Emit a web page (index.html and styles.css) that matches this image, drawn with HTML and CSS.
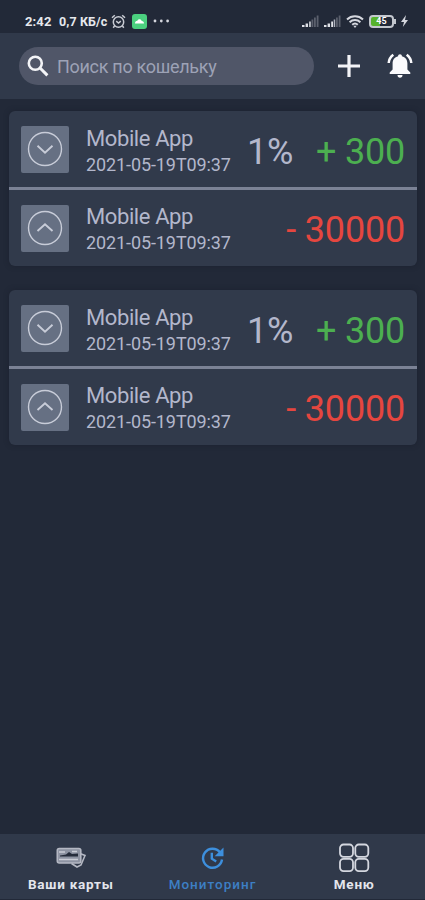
FILE: index.html
```html
<!DOCTYPE html>
<html lang="ru">
<head>
<meta charset="utf-8">
<title>Мониторинг</title>
<link rel="stylesheet" href="styles.css">
</head>
<body>
<div class="screen">
  <div class="status">
    <span class="time">2:42</span>
    <span class="speed">0,7 КБ/с</span>
    <svg class="alarm" width="15" height="15" viewBox="0 0 15 15" fill="none" stroke="#c9ccd4" stroke-width="1.5"><circle cx="7.5" cy="8" r="5.2"/><path d="M5.2 7.2l2.3 1.8 2.3-1.8M1 3.8L3.8 1.2M14 3.8L11.2 1.2M3.500 12l-1.300 1.800M11.500 12l1.300 1.800"/></svg>
    <svg class="app" width="15" height="15" viewBox="0 0 15 15"><rect width="15" height="15" rx="3" fill="#4bd07f"/><path d="M3 9.500c0-2 1-2.500 2.200-2.500C5.800 4.800 9 4.500 9.700 7c1.500 0 2.300 1 2.300 2.500z" fill="#fff"/></svg>
    <svg class="dots" width="17" height="4" viewBox="0 0 17 4" fill="#d5d7de"><circle cx="2" cy="2" r="1.400"/><circle cx="8.300" cy="2" r="1.400"/><circle cx="14.600" cy="2" r="1.400"/></svg>
    <span class="spacer"></span>
    <svg class="signal" width="17" height="12" viewBox="0 0 17 12"><path d="M0 12v-2h2.500v2zM3.600 12V8.500H6V12zM7.200 12V6.500h1.500V12z" fill="#dfe1e7"/><path d="M9.500 12V4.500h1.800V12zM12 12V2.500h1.800V12zM14.700 12V.500h1.800V12z" fill="#5b606d"/></svg>
    <svg class="signal" width="17" height="12" viewBox="0 0 17 12"><path d="M0 12v-2h2.500v2zM3.600 12V8.500H6V12zM7.200 12V6.500h1.800V12z" fill="#dfe1e7"/><path d="M9.700 12V4.500h1.500V12z" fill="#aeb2bc"/><path d="M12 12V2.500h1.800V12zM14.700 12V.500h1.800V12z" fill="#5b606d"/></svg>
    <svg class="wifi" width="18" height="13" viewBox="0 0 18 13" fill="none" stroke="#d5d7de" stroke-width="2"><path d="M1 4.500c4.600-4.300 11.400-4.300 16 0M3.600 7.200c3.100-2.900 7.700-2.900 10.800 0M6.200 9.800c1.600-1.500 4-1.500 5.600 0"/><path d="M7.300 10.800L9 13l1.700-2.200z" fill="#d5d7de" stroke="none"/></svg>
    <span class="battery">45</span>
    <svg class="bolt" width="7" height="12" viewBox="0 0 7 12"><path d="M5 0L0 7h3L1.800 12 7 5H4z" fill="#d5d7de"/></svg>
  </div>
  <header class="header">
    <div class="search">
      <svg width="22" height="22" viewBox="0 0 22 22" fill="none" stroke="#f3f4f7"><circle cx="8.300" cy="8.300" r="6.500" stroke-width="2.600"/><path d="M12.800 12.800l7.600 7.600" stroke-width="3"/></svg>
      <span>Поиск по кошельку</span>
    </div>
    <svg class="plus" width="22" height="22" viewBox="0 0 22 22" stroke="#f3f4f7" stroke-width="3.200"><path d="M11 0v22M0 11h22"/></svg>
    <svg class="bell" width="26" height="26" viewBox="0 0 26 26"><path d="M13 1.300c1.100 0 1.900.7 1.900 1.900 3.500.8 5.500 3.500 5.500 7.300v6l2.900 3V21H2.700v-1.500l2.900-3v-6c0-3.800 2-6.500 5.500-7.300 0-1.200.8-1.900 1.900-1.900zM10.500 22h5c0 1.700-1 2.700-2.500 2.700S10.500 23.700 10.500 22z" fill="#fafafc"/><path d="M6.300 1.800C3.500 3.800 2 6.500 1.700 10M19.700 1.800c2.800 2 4.300 4.700 4.600 8.200" fill="none" stroke="#fafafc" stroke-width="2.500"/></svg>
  </header>
  <main class="list">
    <section class="card">
      <div class="row">
        <div class="tile"><svg width="36" height="36" viewBox="0 0 36 36"><circle cx="18" cy="18" r="16.500"/><path class="chevron" d="M10.500 14.800l7.500 6.800 7.500-6.800"/></svg></div>
        <div class="info"><div class="title">Mobile App</div><div class="date">2021-05-19T09:37</div></div>
        <div class="percent">1%</div>
        <div class="amount plus-sum">+ 300</div>
      </div>
      <div class="row">
        <div class="tile"><svg width="36" height="36" viewBox="0 0 36 36"><circle cx="18" cy="18" r="16.500"/><path class="chevron" d="M10.500 21l7.500-6.800 7.500 6.800"/></svg></div>
        <div class="info"><div class="title">Mobile App</div><div class="date">2021-05-19T09:37</div></div>
        <div class="amount minus-sum">- 30000</div>
      </div>
    </section>
    <section class="card">
      <div class="row">
        <div class="tile"><svg width="36" height="36" viewBox="0 0 36 36"><circle cx="18" cy="18" r="16.500"/><path class="chevron" d="M10.500 14.800l7.500 6.800 7.500-6.800"/></svg></div>
        <div class="info"><div class="title">Mobile App</div><div class="date">2021-05-19T09:37</div></div>
        <div class="percent">1%</div>
        <div class="amount plus-sum">+ 300</div>
      </div>
      <div class="row">
        <div class="tile"><svg width="36" height="36" viewBox="0 0 36 36"><circle cx="18" cy="18" r="16.500"/><path class="chevron" d="M10.500 21l7.500-6.800 7.500 6.800"/></svg></div>
        <div class="info"><div class="title">Mobile App</div><div class="date">2021-05-19T09:37</div></div>
        <div class="amount minus-sum">- 30000</div>
      </div>
    </section>
  </main>
  <nav class="nav">
    <div class="tab">
      <svg width="32" height="32" viewBox="0 0 32 32" fill="none" stroke="#b4b8c3" stroke-width="1.600"><path d="M25 11.500l5 2-4 9.500-4 2-5.500-3.500"/><rect x="2.300" y="6.500" width="23.500" height="14.500" rx="2" fill="#8d93a2"/><path d="M5 13.500l6-1 3-2.500 3 2 6-.5v3H5z" fill="#252c3b" stroke="none"/><path d="M17 9.500h5M4 10h6M4 17.500h19" stroke="#c9ccd5" stroke-width="1.500"/></svg>
      <span>Ваши карты</span>
    </div>
    <div class="tab active">
      <svg width="32" height="32" viewBox="0 0 32 32" fill="none" stroke="#3d8fdd" stroke-width="2.400"><path d="M24 10.300A9.500 9.500 0 1 0 26 17.500M15.800 10.800v5.900l4.400 2.800"/><path d="M27.500 5.500v8.800h-8.800z" fill="#3d8fdd" stroke="none"/></svg>
      <span>Мониторинг</span>
    </div>
    <div class="tab">
      <svg width="32" height="32" viewBox="0 0 32 32" fill="none" stroke="#d4d7df" stroke-width="1.800"><rect x="2" y="2.500" width="13" height="12.300" rx="3.500"/><rect x="17.300" y="2.500" width="13" height="12.300" rx="3.500"/><rect x="2" y="16.800" width="13" height="12.300" rx="3.500"/><rect x="17.300" y="16.800" width="13" height="12.300" rx="3.500"/></svg>
      <span>Меню</span>
    </div>
  </nav>
</div>
</body>
</html>
```
FILE: styles.css
```css
* { box-sizing: border-box; }
body { margin: 0; background: #222938; font-family: Roboto, "Liberation Sans", sans-serif; color: #b3b7cb; }
svg { display: block; flex: none; }
.screen { width: 425px; height: 900px; display: flex; flex-direction: column; overflow: hidden; }
.status { height: 33px; flex: none; display: flex; align-items: center; padding: 9px 17px 0 25px; font-size: 13px; font-weight: 700; color: #e6e8ed; white-space: nowrap; }
.time { width: 34px; letter-spacing: .1px; }
.speed { width: 52px; font-size: 12.5px; letter-spacing: .1px; }
.alarm { margin-right: 6px; }
.dots { margin-left: 6px; }
.spacer { flex: 1; }
.signal { margin-right: 5px; }
.wifi { margin-right: 5px; }
.battery { width: 25px; height: 13px; border: 2px solid #c3c7ce; border-radius: 4px; background: linear-gradient(90deg, #55b32c 0 42%, #222938 42%); font-size: 9px; line-height: 9px; text-align: center; color: #fff; margin-right: 7px; position: relative; }
.battery::after { content: ""; position: absolute; right: -4px; top: 2px; width: 2px; height: 5px; background: #c3c7ce; }
.header { height: 66px; flex: none; background: #30394a; display: flex; align-items: center; padding: 0 12px 0 19px; }
.search { width: 295px; height: 38px; border-radius: 19px; background: #505668; display: flex; align-items: center; padding-left: 8px; gap: 8px; font-size: 18px; letter-spacing: -.3px; color: #9da2b6; white-space: nowrap; }
.plus { margin-left: 24px; }
.bell { margin-left: auto; }
.list { flex: 1; padding: 12px 8px 0 9px; display: flex; flex-direction: column; gap: 24px; }
.card { height: 155px; border-radius: 6px; background: #313a4b; box-shadow: 0 0 5px rgba(22, 27, 40, .5); overflow: hidden; }
.row { height: 76px; display: flex; align-items: center; padding: 0 12px; white-space: nowrap; }
.row + .row { height: 79px; border-top: 3px solid #7b8295; }
.tile { width: 48px; height: 47px; border-radius: 2px; background: #667083; display: flex; align-items: center; justify-content: center; margin-right: 17px; }
.tile svg { fill: none; stroke: #c8ccd8; stroke-width: 1.4; }
.tile .chevron { stroke-width: 1.9; }
.info { width: 161px; padding-top: 4px; }
.title { font-size: 22px; line-height: 26px; letter-spacing: -.4px; }
.date { font-size: 18px; line-height: 25px; letter-spacing: -.1px; }
.percent { font-size: 36px; letter-spacing: -.3px; padding-top: 5px; }
.amount { font-size: 36px; letter-spacing: -.2px; margin-left: auto; padding-top: 5px; }
.row + .row .info { padding-top: 3px; }
.row + .row .amount { padding-top: 4px; }
.plus-sum { color: #4caf50; }
.minus-sum { color: #e5463f; }
.nav { height: 66px; flex: none; background: #30394a; border-bottom: 1px solid #222938; display: grid; grid-template-columns: repeat(3, 1fr); }
.tab { display: flex; flex-direction: column; align-items: center; padding-top: 8px; font-size: 13.5px; font-weight: 700; line-height: 20px; letter-spacing: .75px; color: #e3e5ec; }
.active { color: #3d7fc4; font-weight: 500; letter-spacing: 1px; }
```
